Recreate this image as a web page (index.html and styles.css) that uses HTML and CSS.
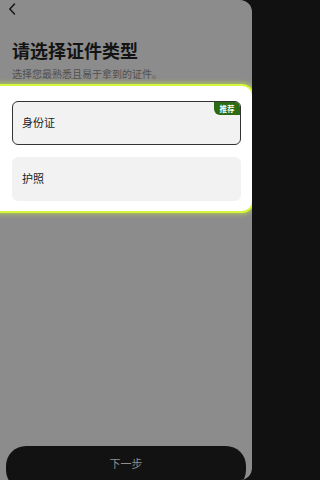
FILE: index.html
```html
<!DOCTYPE html>
<html lang="zh-CN">
<head>
<meta charset="utf-8">
<link rel="stylesheet" href="styles.css">
</head>
<body>
<div class="screen">
  <div class="topbar">
    <svg class="back" width="8" height="12" viewBox="0 0 8 12"><path d="M6.5 1 L1.8 6 L6.5 11" fill="none" stroke="#111" stroke-width="1.4" stroke-linecap="round" stroke-linejoin="round"/></svg>
  </div>
  <h1 class="title">请选择证件类型</h1>
  <p class="subtitle">选择您最熟悉且易于拿到的证件。</p>
  <div class="card">
    <div class="option selected">
      <span class="label">身份证</span>
      <span class="badge">推荐</span>
    </div>
    <div class="option">
      <span class="label">护照</span>
    </div>
  </div>
  <div class="footer">
    <div class="btn">下一步</div>
  </div>
</div>
</body>
</html>
```
FILE: styles.css
```css
html, body {
  margin: 0;
  padding: 0;
  background: #111;
  font-family: "Noto Sans CJK SC", "Noto Sans", sans-serif;
}
.screen {
  width: 252px;
  height: 480px;
  background: #8c8c8c;
  border-radius: 0 12px 12px 0;
  display: flex;
  flex-direction: column;
  overflow: hidden;
}
.topbar {
  height: 16px;
  padding: 3px 0 0 8px;
  box-sizing: border-box;
}
.back {
  display: block;
}
.title {
  margin: 22px 0 0 12px;
  font-size: 18px;
  line-height: 24px;
  font-weight: 700;
  color: #141414;
}
.subtitle {
  margin: 5px 0 0 12px;
  font-size: 10px;
  line-height: 14px;
  color: #505050;
}
.card {
  margin-top: 5px;
  background: #fff;
  border-radius: 0 10px 10px 0;
  padding: 15px 11px 10px 12px;
  display: flex;
  flex-direction: column;
  gap: 12px;
  box-shadow: 0 0 0 2px #d4f73c, 0 0 5px 3px rgba(205, 245, 60, 0.6);
}
.option {
  position: relative;
  height: 44px;
  background: #f2f2f2;
  border-radius: 6px;
  display: flex;
  align-items: center;
  padding: 0 0 3px 10px;
  box-sizing: border-box;
}
.option.selected {
  border: 1px solid #333;
  padding-left: 9px;
  padding-bottom: 2px;
}
.label {
  font-size: 11px;
  color: #222;
}
.badge {
  position: absolute;
  top: 0;
  right: 0;
  width: 26px;
  height: 13px;
  background: #2b6b14;
  color: #fff;
  font-size: 7.5px;
  font-weight: 700;
  line-height: 13px;
  text-align: center;
  border-radius: 0 5px 0 6px;
}
.footer {
  margin-top: auto;
  padding: 0 6px;
}
.btn {
  height: 44px;
  margin-bottom: -10px;
  background: #121212;
  border-radius: 20px;
  color: #8f8f8f;
  font-size: 11px;
  text-align: center;
  line-height: 34px;
}
```
